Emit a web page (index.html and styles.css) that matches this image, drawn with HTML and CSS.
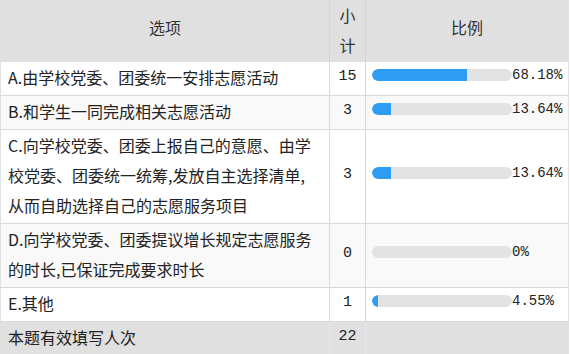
FILE: index.html
```html
<!DOCTYPE html>
<html lang="zh-CN">
<head>
<meta charset="utf-8">
<title>统计</title>
<link rel="stylesheet" href="styles.css">
</head>
<body>
<table class="stats">
  <colgroup>
    <col class="c-opt">
    <col class="c-num">
    <col class="c-pct">
  </colgroup>
  <thead>
    <tr class="head">
      <th class="h-mid">选项</th>
      <th class="h-top">小计</th>
      <th class="h-mid">比例</th>
    </tr>
  </thead>
  <tbody>
    <tr class="odd">
      <td class="opt">A.由学校党委、团委统一安排志愿活动</td>
      <td class="num">15</td>
      <td class="ratio"><div class="bar-line"><span class="track"><span class="fill" style="width:68.18%"></span></span><span class="pct">68.18%</span></div></td>
    </tr>
    <tr class="even">
      <td class="opt">B.和学生一同完成相关志愿活动</td>
      <td class="num">3</td>
      <td class="ratio"><div class="bar-line"><span class="track"><span class="fill" style="width:13.64%"></span></span><span class="pct">13.64%</span></div></td>
    </tr>
    <tr class="odd">
      <td class="opt">C.向学校党委、团委上报自己的意愿、由学<br>校党委、团委统一统筹,发放自主选择清单,<br>从而自助选择自己的志愿服务项目</td>
      <td class="num">3</td>
      <td class="ratio"><div class="bar-line"><span class="track"><span class="fill" style="width:13.64%"></span></span><span class="pct">13.64%</span></div></td>
    </tr>
    <tr class="even">
      <td class="opt">D.向学校党委、团委提议增长规定志愿服务<br>的时长,已保证完成要求时长</td>
      <td class="num">0</td>
      <td class="ratio"><div class="bar-line"><span class="track"><span class="fill" style="width:0%"></span></span><span class="pct">0%</span></div></td>
    </tr>
    <tr class="odd">
      <td class="opt">E.其他</td>
      <td class="num">1</td>
      <td class="ratio"><div class="bar-line"><span class="track"><span class="fill" style="width:4.55%"></span></span><span class="pct">4.55%</span></div></td>
    </tr>
  </tbody>
  <tfoot>
    <tr class="foot">
      <td class="opt">本题有效填写人次</td>
      <td class="num">22</td>
      <td class="ratio"></td>
    </tr>
  </tfoot>
</table>
</body>
</html>
```

FILE: styles.css
```css
html, body {
  margin: 0;
  padding: 0;
  background: #ffffff;
}

body {
  font-family: "Noto Sans CJK SC", "Noto Sans", sans-serif;
  font-size: 16px;
  color: #222;
}

.stats {
  width: 568px;
  table-layout: fixed;
  border-collapse: collapse;
  border-left: 1px solid #e0e0e0;
  border-right: 1px solid #e0e0e0;
}

.c-opt { width: 329px; }
.c-num { width: 36px; }
.c-pct { width: 203px; }

.stats th,
.stats td {
  border: 1px solid #d9d9d9;
  border-top: none;
  line-height: 30px;
  vertical-align: middle;
}

.stats th:first-child,
.stats td:first-child { border-left: none; }
.stats th:last-child,
.stats td:last-child { border-right: none; }

.head {
  height: 62px;
}

.head th {
  padding: 0;
  background: #e0e0e0;
  font-weight: normal;
  color: #333;
  text-align: center;
  border-bottom: none;
  border-color: #d4d4d4;
}

.head .h-mid {
  padding-bottom: 9px;
}

.head .h-top {
  vertical-align: top;
  padding: 0 2px;
  line-height: 30px;
}

.stats td {
  padding: 0 6px 3px 7px;
}

.odd td { background: #ffffff; }
.even td { background: #f9f9f9; }

.stats td.num {
  padding-left: 0;
  padding-right: 0;
  text-align: center;
  font-family: "Liberation Mono", monospace;
  font-size: 15px;
}

.stats td.ratio {
  padding-left: 6px;
  padding-right: 0;
}

.bar-line {
  display: flex;
  align-items: center;
  height: 30px;
  padding-bottom: 4px;
  box-sizing: border-box;
  white-space: nowrap;
}

.track {
  flex: none;
  display: block;
  width: 140px;
  height: 12px;
  border-radius: 6px;
  background: #e3e3e3;
  overflow: hidden;
}

.fill {
  display: block;
  height: 100%;
  background: #2d9cf2;
  border-radius: 6px 0 0 6px;
}

.pct {
  font-family: "Liberation Mono", monospace;
  font-size: 14px;
  line-height: 16px;
  color: #222;
}

.foot td {
  background: #e0e0e0;
  border-bottom: none;
  border-color: #e8e8e8;
}
```
